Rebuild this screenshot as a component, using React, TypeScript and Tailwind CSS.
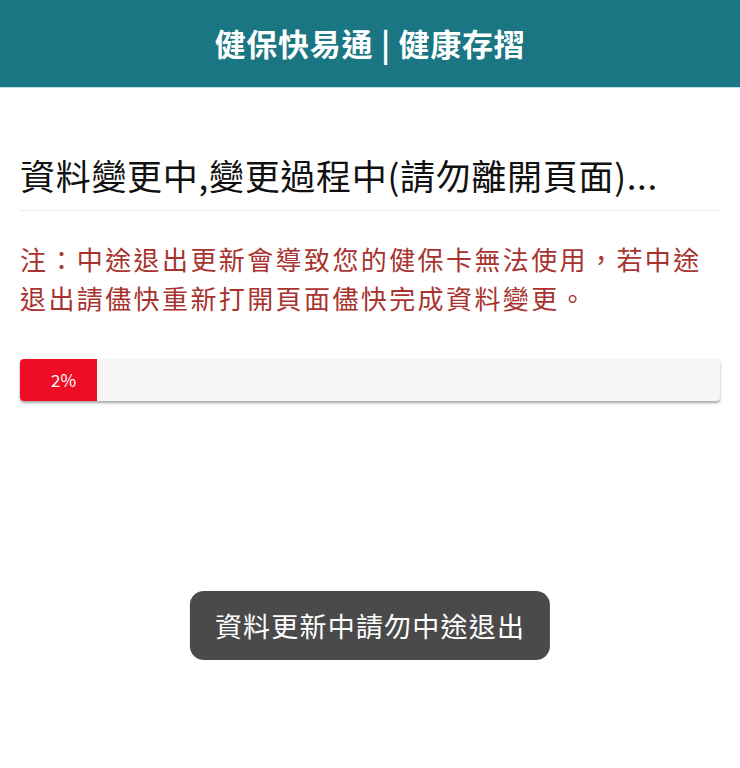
export default function App() {
  const progress = 2;

  return (
    <div className="relative min-h-[768px] bg-white" style={{ fontFamily: '"Noto Sans CJK TC", "Noto Sans", sans-serif' }}>
      <header className="flex h-[88px] items-center justify-center bg-[#1a7682] border-b border-[#b9dde0]">
        <h1 className="text-[31px] font-bold text-white tracking-[0.7px]">健保快易通 | 健康存摺</h1>
      </header>

      <main className="px-5">
        <h2 className="mt-[64px] text-[35px] leading-[46px] text-[#111] tracking-[0.7px]">
          資料變更中,變更過程中(請勿離開頁面)...
        </h2>
        <div className="mt-[12px] border-t border-[#ececec]" />

        <p className="mt-[28px] text-[26px] leading-[39px] text-[#a8332f] tracking-[2.4px]">
          注：中途退出更新會導致您的健保卡無法使用，若中途退出請儘快重新打開頁面儘快完成資料變更。
        </p>

        <div className="mt-[42px] h-[42px] overflow-hidden rounded-[4px] bg-[#f5f5f5] shadow-[0_2px_3px_rgba(0,0,0,0.35)]">
          <div
            className="flex h-full items-center justify-center bg-[#ee0d25] pl-[10px] text-[17px] text-white"
            style={{ width: `${Math.max(progress, 11)}%` }}
          >
            {progress}%
          </div>
        </div>
      </main>

      <div className="absolute left-1/2 top-[591px] -translate-x-1/2 rounded-[14px] bg-[#4a4a4a] px-[25px] py-[13px]">
        <span className="whitespace-nowrap text-[27px] leading-[43px] text-white tracking-[1.2px]">資料更新中請勿中途退出</span>
      </div>
    </div>
  );
}
